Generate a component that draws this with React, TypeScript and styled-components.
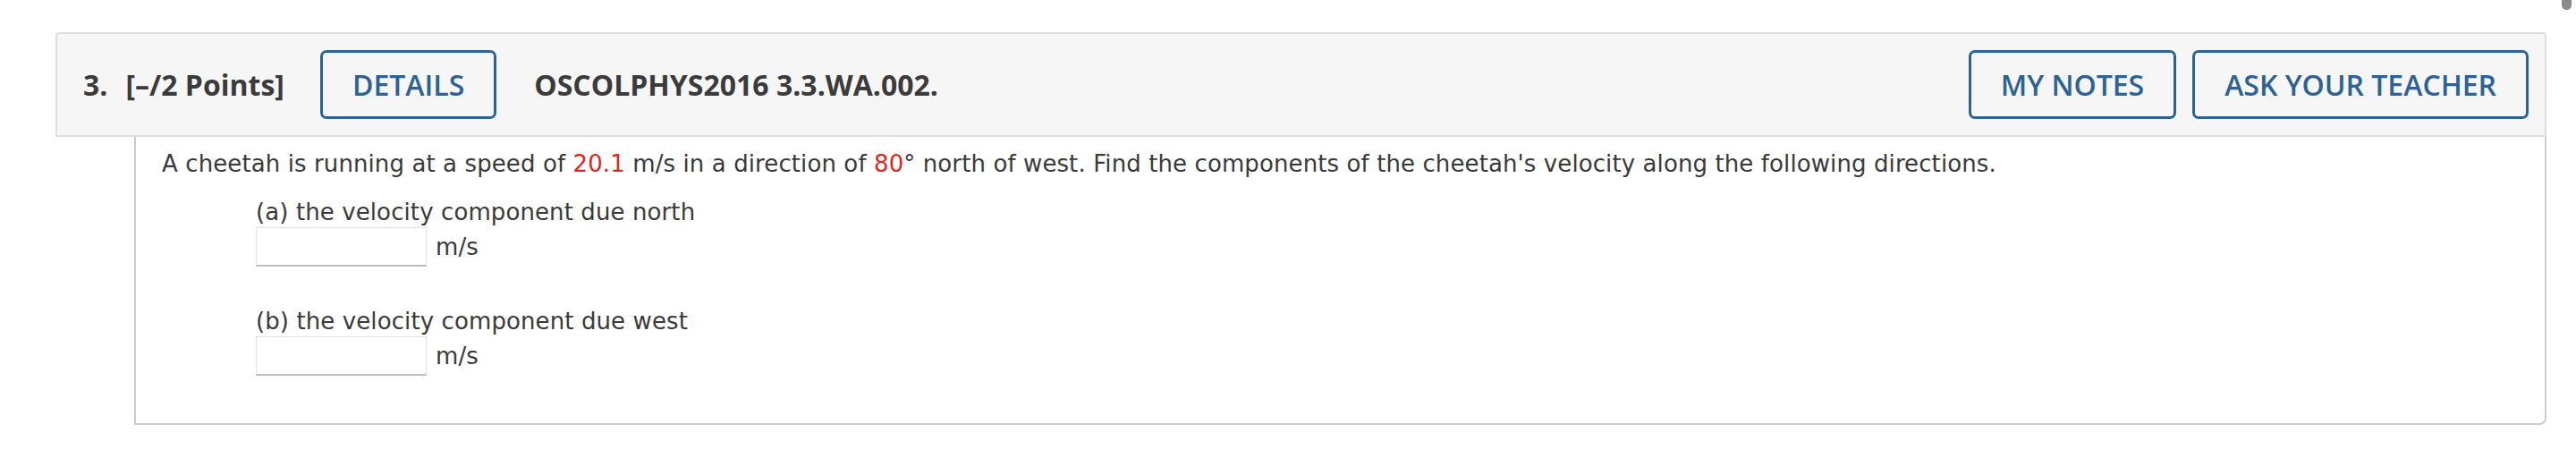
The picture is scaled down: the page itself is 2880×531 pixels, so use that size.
import React from 'react';
import styled, { createGlobalStyle } from 'styled-components';

const GlobalStyle = createGlobalStyle`
  html, body {
    margin: 0;
    padding: 0;
    background: #ffffff;
  }
`;

const Page = styled.div`
  padding: 36px 33px 0 62px;
  height: 531px;
  box-sizing: border-box;
  position: relative;
`;

const ScrollThumb = styled.div`
  position: absolute;
  top: -8px;
  right: 5px;
  width: 11px;
  height: 19px;
  border-radius: 6px;
  background: #8a8a8a;
`;

const Header = styled.div`
  display: flex;
  align-items: center;
  height: 117px;
  box-sizing: border-box;
  padding: 0 18px 0 29px;
  background: #f6f6f6;
  border: 2px solid #dedede;
  border-radius: 4px 4px 0 0;
  font-family: 'Open Sans', 'Liberation Sans', sans-serif;
  color: #3b3b3b;
`;

const Number = styled.span`
  font-size: 32px;
  font-weight: 700;
  margin-right: 20px;
`;

const Points = styled.span`
  font-size: 32px;
  font-weight: 700;
  margin-right: 40px;
`;

const Title = styled.span`
  font-size: 32px;
  font-weight: 700;
  margin-left: 42px;
`;

const Spacer = styled.div`
  flex: 1;
`;

const OutlineButton = styled.button<{ $gap?: number }>`
  height: 77px;
  box-sizing: border-box;
  padding: 0 33px;
  margin-left: ${(p) => p.$gap ?? 0}px;
  background: transparent;
  border: 3px solid #2c6295;
  border-radius: 7px;
  color: #2c6295;
  font-family: 'Open Sans', 'Liberation Sans', sans-serif;
  font-size: 32px;
  font-weight: 600;
  white-space: nowrap;
`;

const Body = styled.div`
  margin-left: 88px;
  padding: 13px 0 53px 29px;
  border: 2px solid #cccccc;
  border-top: none;
  border-radius: 0 0 8px 0;
  font-family: 'DejaVu Sans', Verdana, sans-serif;
  font-size: 26px;
  letter-spacing: 0.1px;
  color: #3a3a3a;
`;

const Question = styled.div`
  line-height: 34px;
`;

const Value = styled.span`
  color: #e3261d;
`;

const Part = styled.div<{ $top: number }>`
  margin-top: ${(p) => p.$top}px;
  padding-left: 105px;
`;

const PartLabel = styled.div`
  line-height: 30px;
`;

const AnswerRow = styled.div`
  display: flex;
  align-items: center;
  gap: 10px;
  margin-top: 2px;
`;

const AnswerInput = styled.div`
  width: 191px;
  height: 44px;
  box-sizing: border-box;
  border: 1px solid #e2e2e2;
  border-bottom: 2px solid #bdbdbd;
  background: #ffffff;
`;

const Unit = styled.span`
  line-height: 30px;
`;

const parts = [
  { key: 'a', label: '(a) the velocity component due north', top: 22 },
  { key: 'b', label: '(b) the velocity component due west', top: 46 },
];

export default function App() {
  return (
    <>
      <GlobalStyle />
      <Page>
        <ScrollThumb />
        <Header>
          <Number>3.</Number>
          <Points>[–/2 Points]</Points>
          <OutlineButton>DETAILS</OutlineButton>
          <Title>OSCOLPHYS2016 3.3.WA.002.</Title>
          <Spacer />
          <OutlineButton>MY NOTES</OutlineButton>
          <OutlineButton $gap={18}>ASK YOUR TEACHER</OutlineButton>
        </Header>
        <Body>
          <Question>
            A cheetah is running at a speed of <Value>20.1</Value> m/s in a direction of{' '}
            <Value>80</Value>° north of west. Find the components of the cheetah's velocity
            along the following directions.
          </Question>
          {parts.map((part) => (
            <Part key={part.key} $top={part.top}>
              <PartLabel>{part.label}</PartLabel>
              <AnswerRow>
                <AnswerInput />
                <Unit>m/s</Unit>
              </AnswerRow>
            </Part>
          ))}
        </Body>
      </Page>
    </>
  );
}
